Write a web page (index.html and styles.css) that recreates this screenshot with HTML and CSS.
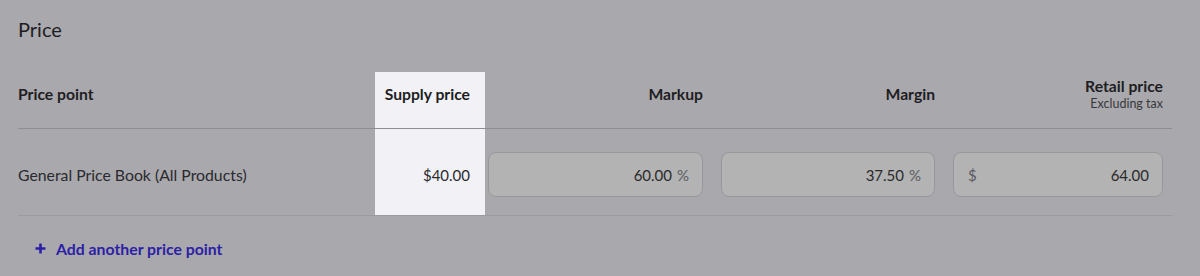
FILE: index.html
```html
<!DOCTYPE html>
<html lang="en">
<head>
    <meta charset="UTF-8">
    <title>Price</title>
    <link rel="stylesheet" href="styles.css">
</head>
<body>
    <div class="price-section">
        <h2 class="section-title">Price</h2>
        <div class="price-table">
            <div class="price-row header-row">
                <div class="cell">Price point</div>
                <div class="cell supply">Supply price</div>
                <div class="cell num first">Markup</div>
                <div class="cell num">Margin</div>
                <div class="cell num">
                    <div>Retail price</div>
                    <div class="sub">Excluding tax</div>
                </div>
            </div>
            <div class="price-row body-row">
                <div class="cell name">General Price Book (All Products)</div>
                <div class="cell supply value">$40.00</div>
                <div class="cell first">
                    <div class="field"><span class="val">60.00</span><span class="unit">%</span></div>
                </div>
                <div class="cell">
                    <div class="field"><span class="val">37.50</span><span class="unit">%</span></div>
                </div>
                <div class="cell">
                    <div class="field"><span class="unit prefix">$</span><span class="val">64.00</span></div>
                </div>
            </div>
        </div>
        <a href="#" class="add-link">
            <svg width="11" height="11" viewBox="0 0 11 11"><path d="M5.5 0.5v10M0.5 5.5h10" stroke="currentColor" stroke-width="2.6" fill="none"/></svg>
            Add another price point
        </a>
    </div>
</body>
</html>
```

FILE: styles.css
```css
body {
    margin: 0;
    background-color: #a9a8ad;
    font-family: Lato, "Open Sans", sans-serif;
    color: #1e1e22;
}

.price-section {
    padding: 17px 28px 0 18px;
}

.section-title {
    margin: 0 0 31px;
    font-size: 20px;
    line-height: 24px;
    font-weight: 400;
}

.price-row {
    display: grid;
    grid-template-columns: 357px 110px 218px 232px 228px;
    padding-right: 9px;
    border-bottom: 1px solid rgba(0, 0, 0, 0.15);
}

.header-row {
    height: 56px;
    font-size: 15.7px;
    font-weight: 700;
}

.header-row .cell {
    padding-bottom: 12px;
}

.body-row {
    height: 86px;
    font-size: 15.8px;
    border-bottom-color: rgba(0, 0, 0, 0.08);
}

.cell {
    display: flex;
    flex-direction: column;
    justify-content: center;
    padding-left: 18px;
}

.cell.first {
    padding-left: 3px;
}

.price-row .cell:first-child {
    padding-left: 0;
}

.body-row .cell {
    padding-top: 5px;
}

.supply {
    background-color: #f1f1f6;
    padding-right: 15px;
    align-items: flex-end;
}

.price-row .supply {
    padding-left: 0;
}

.num {
    align-items: flex-end;
    text-align: right;
}

.sub {
    font-size: 12.5px;
    font-weight: 400;
    color: #38383c;
    margin-top: 1px;
}

.name {
    color: #2a2a2e;
}

.value {
    color: #2a2a2e;
    font-size: 15px;
}

.field {
    display: flex;
    align-items: center;
    height: 43px;
    padding: 0 13px 0 14px;
    background-color: #b3b3b4;
    border: 1px solid #98979b;
    border-radius: 8px;
    font-size: 15px;
    color: #2a2a2a;
}

.field .val {
    flex: 1;
    text-align: right;
}

.field .unit {
    color: #5a5a5e;
    margin-left: 5px;
}

.field .prefix {
    margin-left: 0;
}

.add-link {
    display: inline-flex;
    align-items: center;
    gap: 10px;
    margin: 23px 0 0 17px;
    color: #2c1fa6;
    font-size: 15.8px;
    font-weight: 700;
    text-decoration: none;
}
```
